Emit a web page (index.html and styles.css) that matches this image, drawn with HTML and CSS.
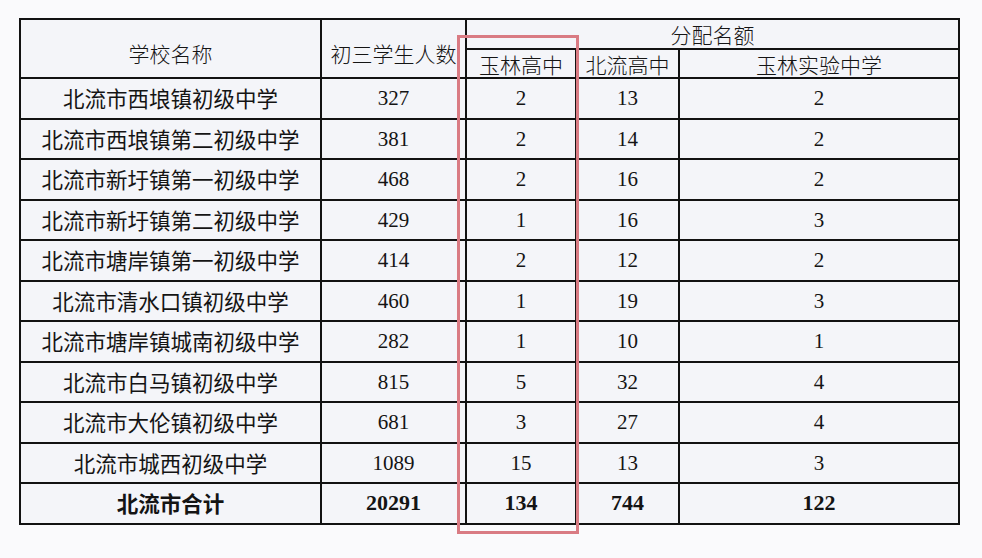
FILE: index.html
```html
<!DOCTYPE html>
<html lang="zh-CN">
<head>
<meta charset="utf-8">
<title>分配名额</title>
<link rel="stylesheet" href="styles.css">
</head>
<body>
<div class="sheet">
  <table class="quota">
    <colgroup>
      <col class="c-name"><col class="c-count"><col class="c-yl"><col class="c-bl"><col class="c-sy">
    </colgroup>
    <thead>
      <tr class="h1">
        <th rowspan="2">学校名称</th>
        <th rowspan="2">初三学生人数</th>
        <th colspan="3">分配名额</th>
      </tr>
      <tr class="h2">
        <th>玉林高中</th>
        <th>北流高中</th>
        <th>玉林实验中学</th>
      </tr>
    </thead>
    <tbody>
      <tr><td class="name">北流市西埌镇初级中学</td><td>327</td><td>2</td><td>13</td><td>2</td></tr>
      <tr><td class="name">北流市西埌镇第二初级中学</td><td>381</td><td>2</td><td>14</td><td>2</td></tr>
      <tr><td class="name">北流市新圩镇第一初级中学</td><td>468</td><td>2</td><td>16</td><td>2</td></tr>
      <tr><td class="name">北流市新圩镇第二初级中学</td><td>429</td><td>1</td><td>16</td><td>3</td></tr>
      <tr><td class="name">北流市塘岸镇第一初级中学</td><td>414</td><td>2</td><td>12</td><td>2</td></tr>
      <tr><td class="name">北流市清水口镇初级中学</td><td>460</td><td>1</td><td>19</td><td>3</td></tr>
      <tr><td class="name">北流市塘岸镇城南初级中学</td><td>282</td><td>1</td><td>10</td><td>1</td></tr>
      <tr><td class="name">北流市白马镇初级中学</td><td>815</td><td>5</td><td>32</td><td>4</td></tr>
      <tr><td class="name">北流市大伦镇初级中学</td><td>681</td><td>3</td><td>27</td><td>4</td></tr>
      <tr><td class="name">北流市城西初级中学</td><td>1089</td><td>15</td><td>13</td><td>3</td></tr>
      <tr class="total"><td class="name">北流市合计</td><td>20291</td><td>134</td><td>744</td><td>122</td></tr>
    </tbody>
  </table>
  <div class="highlight"></div>
</div>
</body>
</html>
```

FILE: styles.css
```css
html, body {
  margin: 0;
  padding: 0;
  background: #fafafc;
}
body {
  width: 982px;
  height: 558px;
  overflow: hidden;
}
.sheet {
  position: relative;
  padding: 18px 0 0 19px;
}
.quota {
  border-collapse: collapse;
  table-layout: fixed;
  width: 939px;
  background: #f4f5f9;
  color: #141414;
}
.c-name { width: 301px; }
.c-count { width: 145px; }
.c-yl { width: 110px; }
.c-bl { width: 103px; }
.c-sy { width: 280px; }
.quota th,
.quota td {
  border: 2px solid #121212;
  padding: 0;
  text-align: center;
  vertical-align: middle;
  white-space: nowrap;
  overflow: hidden;
}
.quota th {
  font-family: "Noto Sans CJK SC", sans-serif;
  font-weight: 300;
  font-size: 21px;
  line-height: 24px;
}
.h1 th { height: 28px; }
.h1 th[rowspan] { padding-top: 8px; }
.h2 th { height: 27px; }
.quota td {
  height: 38.5px;
  font-family: "Liberation Serif", serif;
  font-size: 21px;
  line-height: 24px;
}
.quota td.name {
  font-family: "Noto Sans CJK SC", sans-serif;
  font-weight: 400;
  font-size: 21.5px;
}
.total td {
  font-weight: 700;
  font-size: 22px;
}
.quota .total td.name {
  font-weight: 700;
  font-size: 21.5px;
}
.highlight {
  position: absolute;
  left: 457px;
  top: 35px;
  width: 116px;
  height: 493px;
  border: 3px solid #d97b83;
  pointer-events: none;
}
```
